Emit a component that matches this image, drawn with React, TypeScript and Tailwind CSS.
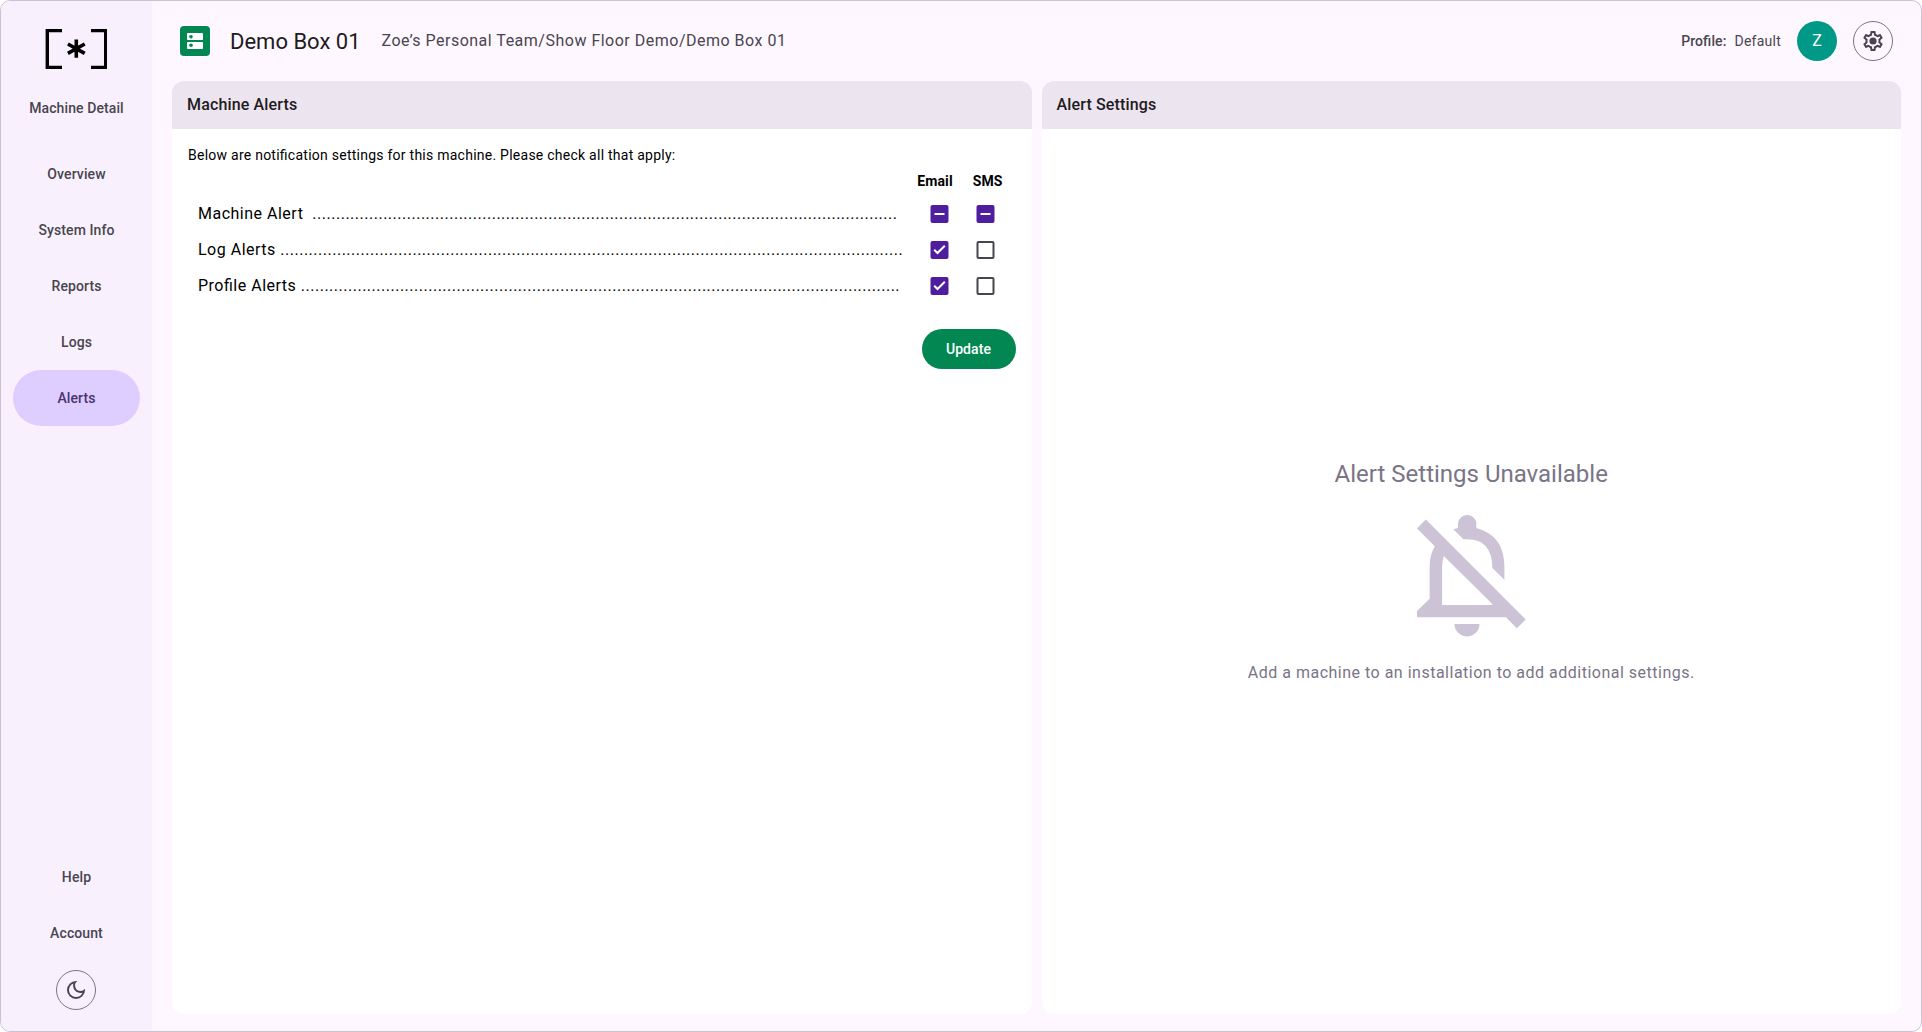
import React from "react";

const navItems = ["Overview", "System Info", "Reports", "Logs", "Alerts"];

const rows = [
  { label: "Machine Alert ", dots: 124, email: "mixed", sms: "mixed" },
  { label: "Log Alerts", dots: 132, email: "on", sms: "off" },
  { label: "Profile Alerts", dots: 127, email: "on", sms: "off" },
];

function Checkbox({ state }: { state: string }) {
  return (
    <svg viewBox="-0.5 0 24 24" className="h-6 w-6">
      {state === "off" ? (
        <rect x="4" y="4" width="16" height="16" rx="1" fill="none" stroke="#49454F" strokeWidth="2" />
      ) : (
        <rect x="3" y="3" width="18" height="18" rx="2" fill="#4F1E9E" />
      )}
      {state === "mixed" && <path d="M7 11h10v2H7z" fill="#fff" />}
      {state === "on" && <path d="M10 16.4 6 12.4l1.4-1.4 2.6 2.6 6.6-6.6L18 8.4z" fill="#fff" />}
    </svg>
  );
}

function Panel({ title, children }: { title: string; children: React.ReactNode }) {
  return (
    <section className="flex flex-1 flex-col overflow-hidden rounded-xl bg-white">
      <header className="flex h-12 shrink-0 items-center bg-[#ECE4EF] px-[15px] text-base font-medium tracking-[0.15px] text-[#1D1B20]">
        {title}
      </header>
      {children}
    </section>
  );
}

function NavItem({ label, active = false }: { label: string; active?: boolean }) {
  return (
    <a
      className={
        active
          ? "flex h-14 w-[127px] items-center justify-center rounded-[28px] bg-[#DECDFF] text-sm font-medium tracking-[0.1px] text-[#4A3470]"
          : "flex h-14 w-[127px] items-center justify-center text-sm font-medium tracking-[0.1px] text-[#49454F]"
      }
    >
      {label}
    </a>
  );
}

export default function App() {
  return (
    <div className="h-[1032px] w-[1922px] bg-white font-['Roboto',sans-serif] [font-feature-settings:'liga'_1]">
      <div className="flex h-full w-full overflow-hidden rounded-[10px] border border-[#CBC3D5] bg-[#FEF7FF]">
        <aside className="flex w-[151px] shrink-0 flex-col items-center bg-[#F8F1FD]">
          <svg viewBox="0 0 62 40" className="mt-7 mr-px h-10 w-[62px] shrink-0" fill="none" stroke="#000">
            <path d="M17 1.5H2.3v37H17M46 1.5h14.7v37H46" strokeWidth="3.4" />
            <path d="M31.3 10.4v18.4M22.9 15l16.8 9.4M39.7 15l-16.8 9.4" strokeWidth="3.6" />
          </svg>
          <div className="mt-[29px] text-sm font-medium leading-5 tracking-[0.1px] text-[#49454F]">Machine Detail</div>
          <nav className="mt-[28px] flex flex-col">
            {navItems.map((n) => (
              <NavItem key={n} label={n} active={n === "Alerts"} />
            ))}
          </nav>
          <div className="mt-auto flex flex-col items-center pb-[21px]">
            <NavItem label="Help" />
            <NavItem label="Account" />
            <button className="mt-[9px] mr-px flex h-10 w-10 items-center justify-center rounded-full border border-[#7A7583]">
              <svg viewBox="0 0 24 24" className="h-6 w-6" fill="#49454F">
                <path d="M9.37 5.51c-.18.64-.27 1.31-.27 1.99 0 4.08 3.32 7.4 7.4 7.4.68 0 1.35-.09 1.99-.27C17.45 17.19 14.93 19 12 19c-3.86 0-7-3.14-7-7 0-2.93 1.81-5.45 4.37-6.49zM12 3a9 9 0 1 0 9 9c0-.46-.04-.92-.1-1.36a5.389 5.389 0 0 1-4.4 2.26 5.403 5.403 0 0 1-3.14-9.8c-.44-.06-.9-.1-1.36-.1z" />
              </svg>
            </button>
          </div>
        </aside>

        <main className="flex flex-1 flex-col pr-5 pb-[17px] pl-5">
          <header className="flex h-20 shrink-0 items-center pr-2 pl-2">
            <div className="flex h-[30px] w-[30px] items-center justify-center rounded bg-[#028752]">
              <svg viewBox="0 0 16 16" className="h-4 w-4">
                <rect width="16" height="7" rx="0.8" fill="#fff" />
                <rect y="9" width="16" height="7" rx="0.8" fill="#fff" />
                <circle cx="4" cy="3.7" r="1.8" fill="#028752" />
                <circle cx="4" cy="12.2" r="1.8" fill="#028752" />
              </svg>
            </div>
            <h1 className="ml-5 pt-px text-[22px] leading-7 text-[#1D1B20]">Demo Box 01</h1>
            <p className="ml-[21px] text-base tracking-[0.5px] text-[#49454F]">
              Zoe’s Personal Team/Show Floor Demo/Demo Box 01
            </p>
            <div className="ml-auto flex items-center text-sm text-[#49454F]">
              <span className="font-medium tracking-[0.1px]">Profile:</span>
              <span className="ml-2 tracking-[0.25px]">Default</span>
              <div className="ml-4 flex h-10 w-10 items-center justify-center rounded-full bg-[#009988] text-base text-white">
                Z
              </div>
              <button className="ml-4 flex h-10 w-10 items-center justify-center rounded-full border border-[#7A7583]">
                <svg viewBox="0 0 24 24" className="h-6 w-6" fill="#49454F">
                  <path d="M19.43 12.98c.04-.32.07-.64.07-.98 0-.34-.03-.66-.07-.98l2.11-1.65c.19-.15.24-.42.12-.64l-2-3.46a.5.5 0 0 0-.61-.22l-2.49 1c-.52-.4-1.08-.73-1.69-.98l-.38-2.65A.488.488 0 0 0 14 2h-4c-.25 0-.46.18-.49.42l-.38 2.65c-.61.25-1.17.59-1.69.98l-2.49-1a.5.5 0 0 0-.61.22l-2 3.46c-.13.22-.07.49.12.64l2.11 1.65c-.04.32-.07.65-.07.98 0 .33.03.66.07.98l-2.11 1.65c-.19.15-.24.42-.12.64l2 3.46a.5.5 0 0 0 .61.22l2.49-1c.52.4 1.08.73 1.69.98l.38 2.65c.03.24.24.42.49.42h4c.25 0 .46-.18.49-.42l.38-2.65c.61-.25 1.17-.59 1.69-.98l2.49 1a.5.5 0 0 0 .61-.22l2-3.46c.12-.22.07-.49-.12-.64l-2.11-1.65zm-1.98-1.71c.04.31.05.52.05.73 0 .21-.02.43-.05.73l-.14 1.13.89.7 1.08.84-.7 1.21-1.27-.51-1.04-.42-.9.68c-.43.32-.84.56-1.25.73l-1.06.43-.16 1.13-.2 1.35h-1.4l-.19-1.35-.16-1.13-1.06-.43c-.43-.18-.83-.41-1.23-.71l-.91-.7-1.06.43-1.27.51-.7-1.21 1.08-.84.89-.7-.14-1.13c-.03-.31-.05-.54-.05-.74s.02-.43.05-.73l.14-1.13-.89-.7-1.08-.84.7-1.21 1.27.51 1.04.42.9-.68c.43-.32.84-.56 1.25-.73l1.06-.43.16-1.13.2-1.35h1.39l.19 1.35.16 1.13 1.06.43c.43.18.83.41 1.23.71l.91.7 1.06-.43 1.27-.51.7 1.21-1.07.85-.89.7.14 1.13z" />
                  <circle cx="12" cy="12" r="3.6" />
                </svg>
              </button>
            </div>
          </header>

          <div className="flex flex-1 gap-[10px]">
            <Panel title="Machine Alerts">
              <div className="flex flex-col pt-4 pr-4 pl-4 text-black">
                <p className="text-sm leading-5 tracking-[0.25px]">
                  Below are notification settings for this machine. Please check all that apply:
                </p>
                <div className="mt-[6px] flex justify-end pr-[13px] text-sm leading-5 font-bold tracking-[0.1px]">
                  <span>Email</span>
                  <span className="ml-5">SMS</span>
                </div>
                <div className="mt-[5px] flex flex-col pl-[10px]">
                  {rows.map((r) => (
                    <div key={r.label} className="flex h-9 items-center">
                      <div className="flex flex-1 text-base tracking-[0.5px] whitespace-pre">
                        <span>{r.label} </span>
                        <span>{".".repeat(r.dots)}</span>
                      </div>
                      <div className="flex gap-[22px] pr-[18.5px]">
                        <Checkbox state={r.email} />
                        <Checkbox state={r.sms} />
                      </div>
                    </div>
                  ))}
                </div>
                <button className="mt-[25px] h-10 w-[94px] self-end rounded-full bg-[#028752] text-sm font-medium tracking-[0.1px] text-white">
                  Update
                </button>
              </div>
            </Panel>
            <Panel title="Alert Settings">
              <div className="flex flex-1 flex-col items-center pt-[329px] text-[#7A7486]">
                <h2 className="text-[24px] leading-8">Alert Settings Unavailable</h2>
                <svg viewBox="0 0 109 123" className="mt-6 h-[123px] w-[109px]" fill="#CCC3D6">
                  <path d="M0 14.5 8.8 5.5 108.7 105.4 99.8 114.2 89 103.3H0V97L12.6 84.8V53Q12.6 41 17.8 32.3zM26.8 42Q25.1 47 25.1 53V91H75.3V90.1z" />
                  <path d="M36.3 15.3 41 13.9V9A9.3 9.3 0 0 1 59.4 9V13.9Q87.4 21.4 87.4 53V65.8L75.3 53.8Q75.3 25.2 50.2 25.2H46.3zM37.5 110H62.5A12.5 12.5 0 0 1 37.5 110z" />
                </svg>
                <p className="mt-6 text-base tracking-[0.5px]">Add a machine to an installation to add additional settings.</p>
              </div>
            </Panel>
          </div>
        </main>
      </div>
    </div>
  );
}
